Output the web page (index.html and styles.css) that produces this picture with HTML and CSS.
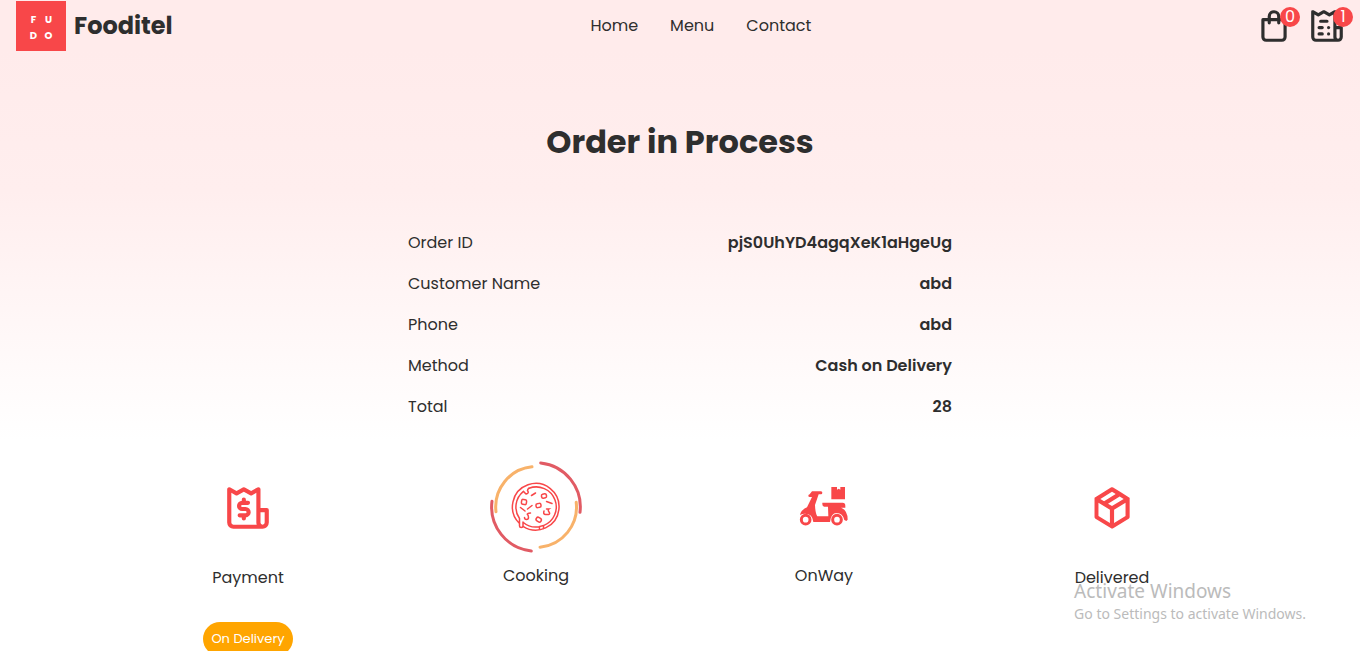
FILE: index.html
```html
<!DOCTYPE html>
<html lang="en">
<head>
<meta charset="utf-8">
<meta name="viewport" content="width=device-width, initial-scale=1">
<title>Fooditel</title>
<link rel="stylesheet" href="styles.css">
</head>
<body>
<header class="header">
  <a class="brand" href="#">
    <span class="logo"><span>F</span><span>U</span><span>D</span><span>O</span></span>
    <span class="brand-name">Fooditel</span>
  </a>
  <nav class="menu">
    <a href="#">Home</a>
    <a href="#">Menu</a>
    <a href="#">Contact</a>
  </nav>
  <div class="actions">
    <a class="action" href="#" aria-label="Cart">
      <svg class="action-icon" viewBox="0 0 24 24"><path d="M19,7H16V6A4,4,0,0,0,8,6V7H5A1,1,0,0,0,4,8V19a3,3,0,0,0,3,3H17a3,3,0,0,0,3-3V8A1,1,0,0,0,19,7ZM10,6a2,2,0,0,1,4,0V7H10Zm8,13a1,1,0,0,1-1,1H7a1,1,0,0,1-1-1V9H8v1a1,1,0,0,0,2,0V9h4v1a1,1,0,0,0,2,0V9h2Z"/></svg>
      <span class="badge">0</span>
    </a>
    <a class="action" href="#" aria-label="Orders">
      <svg class="action-icon" viewBox="0 0 24 24"><path d="M9,12H7a1,1,0,0,0,0,2H9a1,1,0,0,0,0-2ZM8,10h4a1,1,0,0,0,0-2H8a1,1,0,0,0,0,2Zm1,6H7a1,1,0,0,0,0,2H9a1,1,0,0,0,0-2Zm12-4H18V3a1,1,0,0,0-.5-.87,1,1,0,0,0-1,0l-3,1.72-3-1.72a1,1,0,0,0-1,0l-3,1.72-3-1.72a1,1,0,0,0-1,0A1,1,0,0,0,2,3V19a3,3,0,0,0,3,3H19a3,3,0,0,0,3-3V13A1,1,0,0,0,21,12ZM5,20a1,1,0,0,1-1-1V4.73L6,5.87a1.08,1.08,0,0,0,1,0l3-1.72,3,1.72a1.08,1.08,0,0,0,1,0l2-1.14V19a3,3,0,0,0,.18,1Zm15-1a1,1,0,0,1-2,0V14h2Z"/><circle cx="13" cy="13" r="1"/><circle cx="13" cy="17" r="1"/></svg>
      <span class="badge">1</span>
    </a>
  </div>
</header>

<main class="order">
  <h1 class="title">Order in Process</h1>
  <dl class="details">
    <div class="detail"><dt>Order ID</dt><dd>pjS0UhYD4agqXeK1aHgeUg</dd></div>
    <div class="detail"><dt>Customer Name</dt><dd>abd</dd></div>
    <div class="detail"><dt>Phone</dt><dd>abd</dd></div>
    <div class="detail"><dt>Method</dt><dd>Cash on Delivery</dd></div>
    <div class="detail"><dt>Total</dt><dd>28</dd></div>
  </dl>

  <section class="steps">
    <div class="step">
      <div class="step-icon step-icon-tall">
        <svg class="icon" viewBox="0 0 24 24"><path d="M21,12H18V3a1,1,0,0,0-.5-.87,1,1,0,0,0-1,0l-3,1.72-3-1.72a1,1,0,0,0-1,0l-3,1.72-3-1.72a1,1,0,0,0-1,0A1,1,0,0,0,2,3V19a3,3,0,0,0,3,3H19a3,3,0,0,0,3-3V13A1,1,0,0,0,21,12ZM5,20a1,1,0,0,1-1-1V4.73L6,5.87a1.08,1.08,0,0,0,1,0l3-1.72,3,1.72a1.08,1.08,0,0,0,1,0l2-1.14V19a3,3,0,0,0,.18,1Zm15-1a1,1,0,0,1-2,0V14h2Z"/><path class="line" stroke-width="2" d="M12,9.500H9.200a1.500,1.500,0,0,0,0,3h1.600a1.500,1.500,0,0,1,0,3H8M10,8V9.500M10,15.500V17"/></svg>
      </div>
      <span>Payment</span>
      <span class="pill">On Delivery</span>
    </div>
    <div class="step">
      <div class="step-icon">
        <svg class="spinner" viewBox="-48 -48 96 96">
          <g class="ring-red"><path d="M4.700-44A44.300 44.300 0 0 1 44 5.300M-44-5.700A44.300 44.300 0 0 0-4.700 44"/></g>
          <g class="ring-orange"><path d="M-40 4.700A40.300 40.300 0 0 1-4-40.200M40.200-4.700A40.300 40.300 0 0 1 4 40.200"/></g>
          <g class="pizza">
            <path d="M-16.500 16.500A23.300 23.300 0 1 1-13 19.300M-16.500 11.500A20 20 0 0 1-12.500-15.600M-7-18.700A20 20 0 1 1 7.500 18.600M3.500 19.700A20 20 0 0 1-13 15.200M-16.500 11.500V19q0 1.500 1.700 1.500T-13 19v-4M3.500 22.800v-3.300l4-1v3.300"/>
            <path d="M-12.500-15.500l1.500 1.500q1 1.500 2.500.5t0-3q0-1.500 1.500-2.200M-4.500-11.500l4-2.500M10.500-5.500l5.500 2M-8.500 2l4.500-3.500M-15.500.5l4.500 3.500M-11.500 10.500q0 2 2 2t2-2-1-3 3-1.500M8 4q-1 3.500 1.500 3.500h3q2-.5.500-2.500t0-3h-2.500"/>
            <rect x="-14.500" y="-7.500" width="5" height="5" rx="1.500" transform="rotate(8 -12 -5)"/>
            <rect x="5.500" y="-13" width="5" height="4" rx="1.500" transform="rotate(-12 8 -11)"/>
            <rect x="0" y="-3.500" width="5" height="4" rx="1.500" transform="rotate(-8 2.500 -1.500)"/>
            <rect x="0" y="10.500" width="5.500" height="4" rx="2" transform="rotate(35 2.500 12.500)"/>
          </g>
        </svg>
      </div>
      <span>Cooking</span>
    </div>
    <div class="step">
      <div class="step-icon">
        <svg class="icon" viewBox="60 38 150 150">
          <path d="M99 66h27q4 0 4 4.500t-4 4.500h-7l-11 32q1 25 7 34h33l-1-29h-11q-6 0-6-7v-5h61q8 0 8 9v6h-13q20 8 20 36l-4 4-6-3q-5-21-23-21-17 0-20 27h-50q-2-25-25-25-8 0-15 4 2-15 21-23l15-31h-7q-4 0-4-4t4-4.500Z"/>
          <path d="M157 53h17v8l5-3 5 3v-8h14v37h-41Z"/>
          <circle class="line" cx="80" cy="151" r="13" stroke-width="9"/>
          <circle class="line" cx="174" cy="151" r="13" stroke-width="9"/>
        </svg>
      </div>
      <span>OnWay</span>
    </div>
    <div class="step">
      <div class="step-icon step-icon-tall">
        <svg class="icon" viewBox="0 0 24 24"><path d="M20.490,7.520a.19.19,0,0,1,0-.08.17.17,0,0,1,0-.07l0-.09-.06-.15,0,0h0l0,0,0,0a.48.48,0,0,0-.09-.11l-.09-.08h0l-.05,0,0,0L16.260,4.450h0l-3.720-2.300A.85.85,0,0,0,12.250,2h-.08a.82.82,0,0,0-.27,0h-.1a1.130,1.130,0,0,0-.33.13L4,6.780l-.09.07-.09.08L3.720,7l-.05.06,0,0-.06.15,0,.09v.06a.69.69,0,0,0,0,.2v8.730a1,1,0,0,0,.47.85l7.500,4.640h0l0,0,.15.06.08,0a.86.86,0,0,0,.52,0l.08,0,.15-.06,0,0h0L20,17.210a1,1,0,0,0,.47-.85V7.630S20.490,7.560,20.490,7.520ZM12,4.170l1.780,1.100L8.190,8.730,6.400,7.630Zm-1,15L5.500,15.810V9.420l5.500,3.400Zm1-8.110L10.090,9.910l5.590-3.470L17.600,7.630Zm6.500,4.720L13,19.200V12.820l5.500-3.400Z"/></svg>
      </div>
      <span>Delivered</span>
    </div>
  </section>
</main>

<aside class="notice">
  <p class="notice-title">Activate Windows</p>
  <p class="notice-text">Go to Settings to activate Windows.</p>
</aside>
</body>
</html>
```

FILE: styles.css
```css
* {
  box-sizing: border-box;
}

html {
  height: 100%;
  overflow: hidden;
}

body {
  margin: 0;
  min-height: 100%;
  background: #fff linear-gradient(180deg, #ffebeb 50px, #ffeeee 190px, #fff 440px) no-repeat;
  color: #2e2e2e;
  font-family: Poppins, Inter, sans-serif;
  font-size: 16px;
  line-height: 24px;
}

a {
  color: inherit;
  text-decoration: none;
}

.header {
  display: flex;
  justify-content: space-between;
  align-items: center;
  padding: 1px 14px 0 16px;
}

.brand {
  display: flex;
  align-items: center;
  gap: 8px;
}

.logo {
  display: grid;
  grid-template-columns: 15px 15px;
  grid-auto-rows: 16px;
  place-content: center;
  justify-items: center;
  align-items: center;
  width: 50px;
  height: 50px;
  padding-top: 4px;
  background: #f84749;
  color: #fff;
  font-size: 10px;
  font-weight: 700;
  line-height: 16px;
}

.brand-name {
  font-size: 24px;
  font-weight: 700;
}

.menu {
  display: flex;
  gap: 32px;
}

.actions {
  display: flex;
  gap: 15px;
  padding-left: 26px;
}

.action {
  position: relative;
  display: flex;
}

.action-icon {
  width: 38px;
  height: 38px;
  fill: #2e2e2e;
}

.badge {
  position: absolute;
  top: 0;
  right: -7px;
  width: 20px;
  height: 20px;
  border-radius: 50%;
  background: #f84749;
  color: #fff;
  line-height: 20px;
  text-align: center;
}

.title {
  margin: 71px 0 0;
  font-size: 32px;
  font-weight: 700;
  line-height: 40px;
  text-align: center;
}

.details {
  display: flex;
  flex-direction: column;
  gap: 17px;
  width: 40%;
  margin: 69px auto 0;
}

.detail {
  display: flex;
  justify-content: space-between;
}

.detail dd {
  margin: 0;
  font-weight: 600;
}

.steps {
  display: grid;
  grid-template-columns: repeat(4, 1fr);
  padding: 0 104px;
  margin-top: 43px;
}

.step {
  display: flex;
  flex-direction: column;
  align-items: center;
}

.step-icon {
  display: flex;
  align-items: center;
  justify-content: center;
  height: 90px;
  margin-bottom: 12px;
}

.step-icon-tall {
  height: 92px;
}

.icon {
  width: 50px;
  height: 50px;
  fill: #f84749;
}

.line {
  fill: none;
  stroke: #f84749;
  stroke-linecap: round;
}

.spinner {
  width: 96px;
  height: 96px;
  fill: none;
  stroke-linecap: round;
}

.ring-red {
  stroke: #e15b64;
  stroke-width: 3px;
}

.ring-orange {
  stroke: #f8b26a;
  stroke-width: 3px;
}

.pizza {
  stroke: #f84749;
  stroke-width: 1.5px;
}

.pill {
  margin-top: 32px;
  padding: 5px 8px;
  border-radius: 17px;
  background: #ffa500;
  color: #fff;
  font-size: 13px;
}

.notice {
  position: absolute;
  right: 54px;
  bottom: 26px;
  color: #bbb;
  font-family: "Segoe UI", "Noto Sans", sans-serif;
}

.notice p {
  margin: 0;
}

.notice-title {
  font-size: 19px;
}

.notice-text {
  font-size: 14px;
  line-height: 22px;
}
```
